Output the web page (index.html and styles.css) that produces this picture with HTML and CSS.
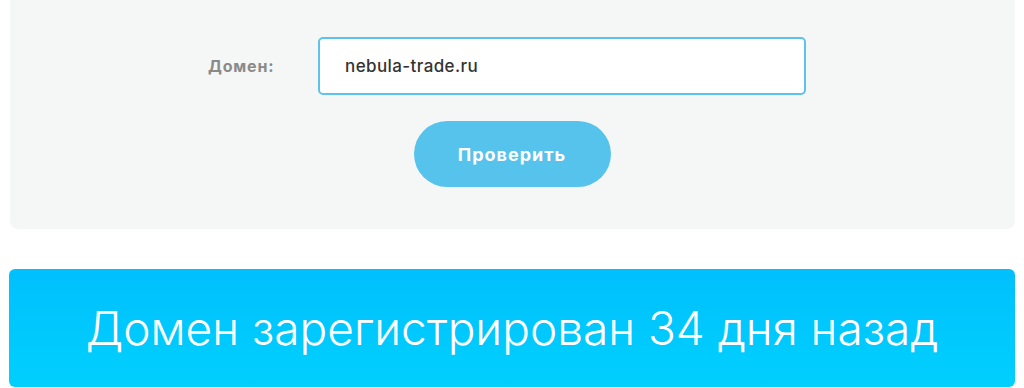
FILE: index.html
```html
<!DOCTYPE html>
<html lang="ru">
<head>
    <meta charset="UTF-8">
    <meta name="viewport" content="width=device-width, initial-scale=1.0">
    <title>Проверка домена</title>
    <link rel="stylesheet" href="styles.css">
</head>
<body>

    <form class="check-panel" id="checkForm">
        <div class="field-row">
            <label class="field-label" for="domain">Домен:</label>
            <input class="field-input" type="text" id="domain" name="domain" value="nebula-trade.ru">
        </div>
        <button class="check-btn" type="submit">Проверить</button>
    </form>

    <div class="result-bar">Домен зарегистрирован 34 дня назад</div>

</body>
</html>
```

FILE: styles.css
```css
body {
    margin: 0;
    padding: 0 9px 0 10px;
    background-color: #fff;
    font-family: Inter, "Open Sans", sans-serif;
}

.check-panel {
    height: 229px;
    box-sizing: border-box;
    padding-top: 37px;
    background-color: #f5f6f6;
    border-radius: 0 0 8px 8px;
    display: flex;
    flex-direction: column;
    align-items: center;
}

.field-row {
    display: flex;
    align-items: center;
    align-self: flex-start;
    margin-left: 198px;
}

.field-label {
    width: 110px;
    font-size: 16px;
    font-weight: 700;
    letter-spacing: 0.8px;
    color: #8a8a8a;
}

.field-input {
    width: 488px;
    height: 58px;
    box-sizing: border-box;
    padding: 0 25px;
    border: 2px solid #5ec3ea;
    border-radius: 5px;
    background-color: #fff;
    font-family: inherit;
    font-size: 17px;
    font-weight: 500;
    letter-spacing: 0.4px;
    color: #333;
    outline: none;
}

.check-btn {
    margin-top: 26px;
    margin-left: -1px;
    width: 197px;
    height: 66px;
    border: none;
    border-radius: 33px;
    background-color: #55c3eb;
    font-family: inherit;
    font-size: 18px;
    font-weight: 700;
    letter-spacing: 1px;
    color: #fff;
    cursor: pointer;
}

.result-bar {
    margin-top: 40px;
    height: 118px;
    margin-left: -1px;
    display: flex;
    align-items: center;
    justify-content: center;
    border-radius: 6px;
    background: linear-gradient(to bottom, #00c0fd, #00d0fd);
    font-size: 46px;
    font-weight: 300;
    color: #fff;
}
```
